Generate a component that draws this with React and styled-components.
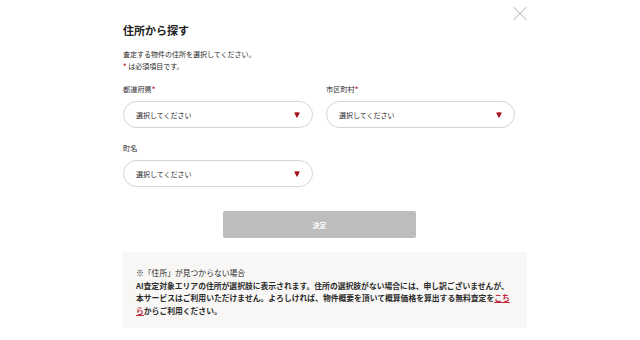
import React from 'react';
import styled, { createGlobalStyle } from 'styled-components';

const GlobalStyle = createGlobalStyle`
  html, body {
    margin: 0;
    padding: 0;
    background: #fff;
  }
  body {
    font-family: "Noto Sans CJK JP", "Noto Sans", sans-serif;
    color: #2b2b2b;
  }
`;

const Modal = styled.div`
  position: relative;
  width: 640px;
  height: 340px;
  box-sizing: border-box;
  padding: 22px 113px 0 123px;
  background: #fff;
`;

const CloseButton = styled.button`
  position: absolute;
  top: 6px;
  left: 513px;
  width: 14px;
  height: 14px;
  padding: 0;
  border: 0;
  background: transparent;
  cursor: pointer;

  &::before,
  &::after {
    content: '';
    position: absolute;
    left: -2px;
    top: 6.5px;
    width: 18px;
    height: 1px;
    background: #c4c4c4;
  }
  &::before { transform: rotate(45deg); }
  &::after { transform: rotate(-45deg); }
`;

const Title = styled.h2`
  margin: 0;
  font-size: 11px;
  line-height: 16px;
  font-weight: 700;
  color: #222;
`;

const Lead = styled.p`
  margin: 9.5px 0 0;
  font-size: 7px;
  line-height: 12px;
  color: #2b2b2b;
`;

const Required = styled.span`
  color: #c0283c;
  font-weight: 700;
`;

const FieldRow = styled.div`
  display: grid;
  grid-template-columns: 190px 189px;
  column-gap: 13px;
  margin-top: ${({ $gap }) => $gap}px;
`;

const Field = styled.div`
  display: flex;
  flex-direction: column;
`;

const Label = styled.label`
  font-size: 7.2px;
  line-height: 12px;
  color: #2b2b2b;
  margin-bottom: 6px;
`;

const SelectBox = styled.div`
  display: flex;
  align-items: center;
  justify-content: space-between;
  height: 27px;
  box-sizing: border-box;
  padding: 0 12px 0 12px;
  border: 1px solid #d4d4d4;
  border-radius: 14px;
  background: #fff;
  font-size: 7px;
  color: #2b2b2b;
`;

const Arrow = styled.svg`
  width: 6px;
  height: 6px;
  display: block;
`;

const Submit = styled.button`
  display: block;
  width: 193px;
  height: 27px;
  margin: 24px 0 0 100px;
  border: 0;
  border-radius: 2px;
  background: #bdbdbd;
  color: #fff;
  font-family: inherit;
  font-size: 7px;
  font-weight: 700;
`;

const Notice = styled.div`
  margin-top: 14px;
  width: 404px;
  height: 76px;
  box-sizing: border-box;
  padding: 14.5px 13px 0 13px;
  background: #f8f7f5;
`;

const NoticeTitle = styled.p`
  margin: 0;
  font-size: 7.8px;
  line-height: 12px;
  color: #2b2b2b;
`;

const NoticeBody = styled.p`
  margin: 1px 0 0;
  font-size: 7.8px;
  line-height: 12.5px;
  font-weight: 700;
  color: #2b2b2b;
  white-space: nowrap;
`;

const Link = styled.a`
  color: #c0283c;
  text-decoration: underline;
`;

const Select = ({ placeholder = '選択してください' }) => (
  <SelectBox>
    <span>{placeholder}</span>
    <Arrow viewBox="0 0 6 6">
      <path d="M0.4 0.6 Q3 -0.2 5.6 0.6 Q5.8 1 5.4 1.6 L3.4 5.4 Q3 5.9 2.6 5.4 L0.6 1.6 Q0.2 1 0.4 0.6 Z" fill="#a3121c" />
    </Arrow>
  </SelectBox>
);

export default function App() {
  return (
    <>
      <GlobalStyle />
      <Modal>
        <CloseButton aria-label="閉じる" />
        <Title>住所から探す</Title>
        <Lead>
          査定する物件の住所を選択してください。<br />
          <Required>*</Required> は必須項目です。
        </Lead>
        <FieldRow $gap={11.5}>
          <Field>
            <Label>都道府県<Required>*</Required></Label>
            <Select />
          </Field>
          <Field>
            <Label>市区町村<Required>*</Required></Label>
            <Select />
          </Field>
        </FieldRow>
        <FieldRow $gap={14}>
          <Field>
            <Label>町名</Label>
            <Select />
          </Field>
        </FieldRow>
        <Submit disabled>決定</Submit>
        <Notice>
          <NoticeTitle>※「住所」が見つからない場合</NoticeTitle>
          <NoticeBody>
            AI査定対象エリアの住所が選択肢に表示されます。住所の選択肢がない場合には、申し訳ございませんが、<br />
            本サービスはご利用いただけません。よろしければ、物件概要を頂いて概算価格を算出する無料査定を<Link href="#">こち<br />ら</Link>からご利用ください。
          </NoticeBody>
        </Notice>
      </Modal>
    </>
  );
}
